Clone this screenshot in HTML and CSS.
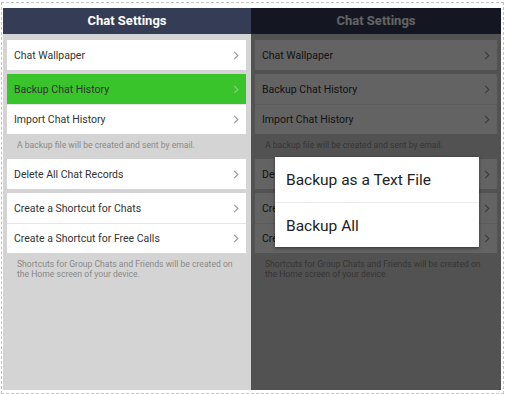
FILE: index.html
```html
<!DOCTYPE html>
<html lang="en">
<head>
    <meta charset="UTF-8">
    <meta name="viewport" content="width=device-width, initial-scale=1.0">
    <title>Chat Settings</title>
    <link rel="stylesheet" href="styles.css">
</head>
<body>
    <div class="frame">
        <div class="screen left">
            <div class="header">Chat Settings</div>
            <div class="list">
                <div class="card">
                    <div class="row"><span>Chat Wallpaper</span><svg class="chev" viewBox="0 0 6 10"><polyline points="1,1 5,5 1,9"/></svg></div>
                </div>
                <div class="card">
                    <div class="row active"><span>Backup Chat History</span><svg class="chev" viewBox="0 0 6 10"><polyline points="1,1 5,5 1,9"/></svg></div>
                    <div class="row"><span>Import Chat History</span><svg class="chev" viewBox="0 0 6 10"><polyline points="1,1 5,5 1,9"/></svg></div>
                </div>
                <p class="note">A backup file will be created and sent by email.</p>
                <div class="card">
                    <div class="row"><span>Delete All Chat Records</span><svg class="chev" viewBox="0 0 6 10"><polyline points="1,1 5,5 1,9"/></svg></div>
                </div>
                <div class="card">
                    <div class="row"><span>Create a Shortcut for Chats</span><svg class="chev" viewBox="0 0 6 10"><polyline points="1,1 5,5 1,9"/></svg></div>
                    <div class="row"><span>Create a Shortcut for Free Calls</span><svg class="chev" viewBox="0 0 6 10"><polyline points="1,1 5,5 1,9"/></svg></div>
                </div>
                <p class="note">Shortcuts for Group Chats and Friends will be created on<br>the Home screen of your device.</p>
            </div>
        </div>
        <div class="screen right">
            <div class="header">Chat Settings</div>
            <div class="list">
                <div class="card">
                    <div class="row"><span>Chat Wallpaper</span><svg class="chev" viewBox="0 0 6 10"><polyline points="1,1 5,5 1,9"/></svg></div>
                </div>
                <div class="card">
                    <div class="row"><span>Backup Chat History</span><svg class="chev" viewBox="0 0 6 10"><polyline points="1,1 5,5 1,9"/></svg></div>
                    <div class="row"><span>Import Chat History</span><svg class="chev" viewBox="0 0 6 10"><polyline points="1,1 5,5 1,9"/></svg></div>
                </div>
                <p class="note">A backup file will be created and sent by email.</p>
                <div class="card">
                    <div class="row"><span>Delete All Chat Records</span><svg class="chev" viewBox="0 0 6 10"><polyline points="1,1 5,5 1,9"/></svg></div>
                </div>
                <div class="card">
                    <div class="row"><span>Create a Shortcut for Chats</span><svg class="chev" viewBox="0 0 6 10"><polyline points="1,1 5,5 1,9"/></svg></div>
                    <div class="row"><span>Create a Shortcut for Free Calls</span><svg class="chev" viewBox="0 0 6 10"><polyline points="1,1 5,5 1,9"/></svg></div>
                </div>
                <p class="note">Shortcuts for Group Chats and Friends will be created on<br>the Home screen of your device.</p>
            </div>
            <div class="dim"></div>
            <div class="dialog">
                <div class="option">Backup as a Text File</div>
                <div class="option">Backup All</div>
            </div>
        </div>
    </div>
</body>
</html>
```

FILE: styles.css
```css
body {
    margin: 0;
    background-color: #fff;
    font-family: Roboto, "Liberation Sans", sans-serif;
}
.frame {
    box-sizing: border-box;
    width: 503px;
    height: 392px;
    margin: 2px 0 0 1px;
    padding: 5px 1px 2px 1px;
    border: 1px dashed #c4c4c4;
    display: flex;
}
.screen {
    position: relative;
    height: 382px;
    background-color: #d4d4d4;
    overflow: hidden;
}
.screen.left {
    width: 248px;
}
.screen.right {
    width: 250px;
}
.header {
    height: 26px;
    line-height: 26px;
    background-color: #353c55;
    color: #fff;
    font-size: 13px;
    font-weight: bold;
    text-align: center;
}
.list {
    padding: 6px 5px 0 4px;
}
.right .list {
    padding-right: 4px;
}
.card {
    background-color: #fff;
    margin-bottom: 4px;
}
.row {
    height: 30px;
    display: flex;
    align-items: center;
    justify-content: space-between;
    padding: 0 7px;
    font-size: 10.5px;
    color: #333;
}
.row + .row {
    border-top: 1px solid #e6e6e6;
    height: 29px;
}
.row.active {
    background-color: #3ac42c;
}
.row.active .chev polyline {
    stroke: #7fd673;
}
.chev {
    width: 6px;
    height: 9px;
}
.chev polyline {
    fill: none;
    stroke: #9a9a9a;
    stroke-width: 1.3;
}
.note {
    margin: 0 0 9px 0;
    padding: 2px 4px 0 10px;
    font-size: 8.6px;
    line-height: 10px;
    color: #8a8a8a;
    white-space: nowrap;
}
.dim {
    position: absolute;
    top: 0;
    left: 0;
    right: 0;
    bottom: 0;
    background-color: rgba(0, 0, 0, 0.61);
}
.dialog {
    position: absolute;
    top: 149px;
    left: 24px;
    width: 204px;
    background-color: #fff;
    box-shadow: 0 1px 3px rgba(0, 0, 0, 0.5);
}
.option {
    height: 45px;
    line-height: 47px;
    padding-left: 11px;
    font-size: 15.5px;
    color: #222;
}
.option + .option {
    border-top: 1px solid #ececec;
    height: 44px;
    line-height: 46px;
}
```
